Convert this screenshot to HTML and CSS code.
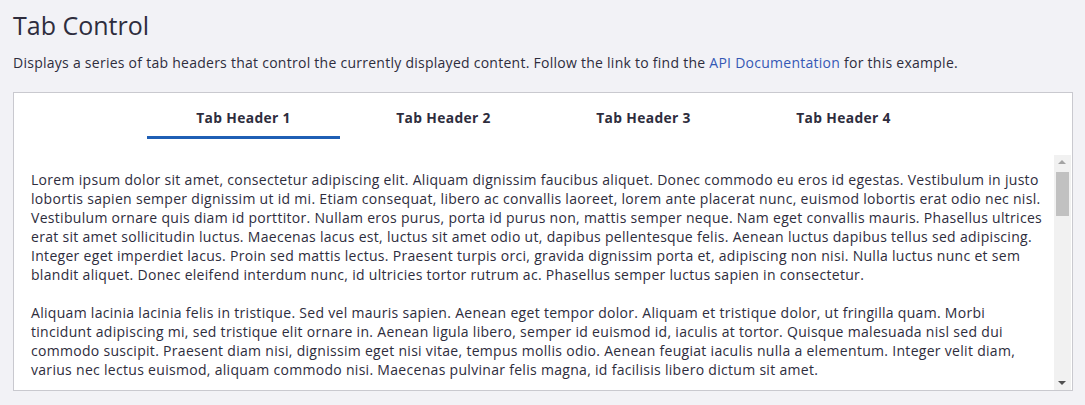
FILE: index.html
```html
<!DOCTYPE html>
<html lang="en">
<head>
<meta charset="utf-8">
<title>Tab Control</title>
<link rel="stylesheet" href="styles.css">
</head>
<body>
<main class="page">
  <h1 class="title">Tab Control</h1>
  <p class="intro">Displays a series of tab headers that control the currently displayed content. Follow the link to find the <a class="link" href="#">API Documentation</a> for this example.</p>
  <section class="tabs">
    <nav class="tab-list">
      <button class="tab tab-active">Tab Header 1</button>
      <button class="tab">Tab Header 2</button>
      <button class="tab">Tab Header 3</button>
      <button class="tab">Tab Header 4</button>
    </nav>
    <div class="tab-panel">
      <div class="tab-content">
        <p class="para">Lorem ipsum dolor sit amet, consectetur adipiscing elit. Aliquam dignissim faucibus aliquet. Donec commodo eu eros id egestas. Vestibulum in justo lobortis sapien semper dignissim ut id mi. Etiam consequat, libero ac convallis laoreet, lorem ante placerat nunc, euismod lobortis erat odio nec nisl. Vestibulum ornare quis diam id porttitor. Nullam eros purus, porta id purus non, mattis semper neque. Nam eget convallis mauris. Phasellus ultrices erat sit amet sollicitudin luctus. Maecenas lacus est, luctus sit amet odio ut, dapibus pellentesque felis. Aenean luctus dapibus tellus sed adipiscing. Integer eget imperdiet lacus. Proin sed mattis lectus. Praesent turpis orci, gravida dignissim porta et, adipiscing non nisi. Nulla luctus nunc et sem blandit aliquet. Donec eleifend interdum nunc, id ultricies tortor rutrum ac. Phasellus semper luctus sapien in consectetur.</p>
        <p class="para">Aliquam lacinia lacinia felis in tristique. Sed vel mauris sapien. Aenean eget tempor dolor. Aliquam et tristique dolor, ut fringilla quam. Morbi tincidunt adipiscing mi, sed tristique elit ornare in. Aenean ligula libero, semper id euismod id, iaculis at tortor. Quisque malesuada nisl sed dui commodo suscipit. Praesent diam nisi, dignissim eget nisi vitae, tempus mollis odio. Aenean feugiat iaculis nulla a elementum. Integer velit diam, varius nec lectus euismod, aliquam commodo nisi. Maecenas pulvinar felis magna, id facilisis libero dictum sit amet.</p>
      </div>
      <div class="scrollbar" aria-hidden="true">
        <span class="sb-arrow sb-up"></span>
        <span class="sb-thumb"></span>
        <span class="sb-track"></span>
        <span class="sb-arrow sb-down"></span>
      </div>
    </div>
  </section>
</main>
</body>
</html>
```

FILE: styles.css
```css
html, body {
  margin: 0;
  padding: 0;
  background: #f2f2f6;
}
body {
  font-family: "Open Sans", "Noto Sans", sans-serif;
  color: #2e2d3d;
}
.page {
  padding: 9px 12px 0 13px;
}
.title {
  margin: 0;
  font-size: 25px;
  font-weight: 400;
  line-height: 32px;
}
.intro {
  margin: 12px 0 0 0;
  font-size: 14px;
  letter-spacing: 0.26px;
  line-height: 20px;
}
.link {
  color: #3558b5;
  text-decoration: none;
}
.tabs {
  margin-top: 19px;
  background: #fff;
  border: 1px solid #c9c9cf;
  height: 299px;
  box-sizing: border-box;
  display: flex;
  flex-direction: column;
}
.tab-list {
  display: flex;
  flex: none;
  padding-left: 133px;
  gap: 7px;
}
.tab {
  width: 193px;
  height: 46px;
  border: 0;
  border-bottom: 3px solid transparent;
  background: transparent;
  font-family: inherit;
  font-size: 13.8px;
  letter-spacing: 0.35px;
  font-weight: 700;
  color: #2e2d3d;
  padding: 6px 0 0 0;
  cursor: pointer;
}
.tab-active {
  border-bottom-color: #1f5fb5;
}
.tab-panel {
  margin-top: 16px;
  flex: 1;
  min-height: 0;
  display: flex;
  margin-right: 1px;
}
.tab-content {
  flex: 1;
  min-width: 0;
  overflow: hidden;
  padding: 15px 5px 0 17px;
}
.para {
  margin: 0 0 19px 0;
  font-size: 14px;
  letter-spacing: 0.3px;
  line-height: 19px;
}
.scrollbar {
  width: 17px;
  flex: none;
  background: #f1f1f1;
  display: flex;
  flex-direction: column;
  align-items: center;
}
.sb-arrow {
  flex: none;
  width: 17px;
  height: 17px;
  position: relative;
}
.sb-arrow::after {
  content: "";
  position: absolute;
  left: 4px;
  border-left: 4px solid transparent;
  border-right: 4px solid transparent;
}
.sb-up::after {
  top: 5px;
  border-bottom: 4px solid #a3a3a3;
}
.sb-down::after {
  top: 8px;
  border-top: 4px solid #505050;
}
.sb-thumb {
  flex: none;
  width: 13px;
  height: 44px;
  background: #c1c1c1;
}
.sb-track {
  flex: 1;
}
```
